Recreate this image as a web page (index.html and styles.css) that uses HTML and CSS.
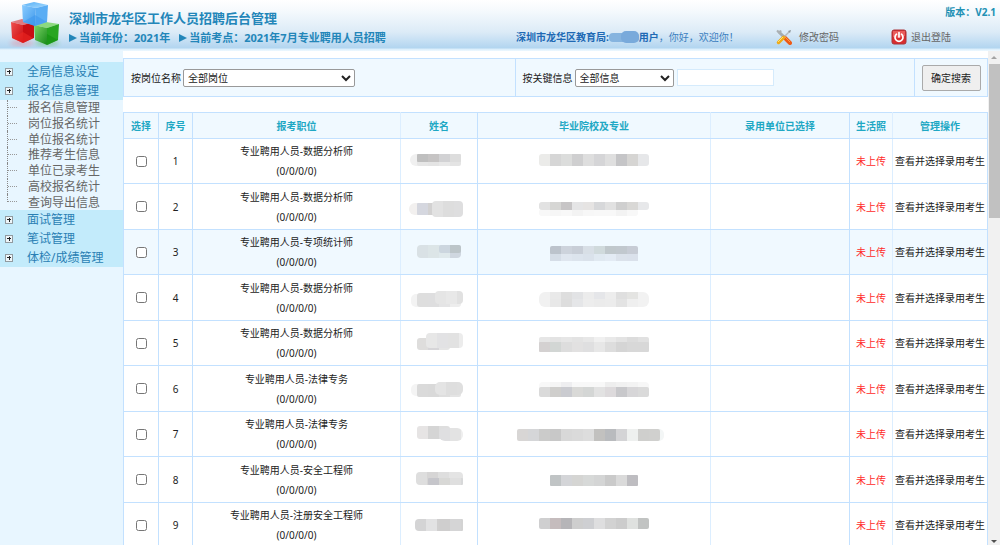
FILE: index.html
```html
<!DOCTYPE html>
<html lang="zh-CN">
<head>
<meta charset="utf-8">
<title>深圳市龙华区工作人员招聘后台管理</title>
<link rel="stylesheet" href="styles.css">
</head>
<body>
<header class="topbar">
  <svg class="logo" viewBox="0 0 69 50" aria-hidden="true">
    <defs>
      <linearGradient id="blueTop" x1="0" y1="0" x2="1" y2="1"><stop offset="0" stop-color="#56aef5"/><stop offset="1" stop-color="#a5dbff"/></linearGradient>
      <linearGradient id="blueL" x1="0" y1="0" x2="1" y2="1"><stop offset="0" stop-color="#8accff"/><stop offset="1" stop-color="#3d97ea"/></linearGradient>
      <linearGradient id="redL" x1="0" y1="0" x2="1" y2="1"><stop offset="0" stop-color="#f05050"/><stop offset="1" stop-color="#c80c10"/></linearGradient>
      <linearGradient id="greenL" x1="0" y1="0" x2="1" y2="1"><stop offset="0" stop-color="#7dd568"/><stop offset="1" stop-color="#168a18"/></linearGradient>
      <filter id="soft"><feGaussianBlur stdDeviation="2"/></filter>
    </defs>
    <ellipse cx="22" cy="43" rx="12" ry="3" fill="#e98b98" opacity=".5" filter="url(#soft)"/>
    <ellipse cx="47" cy="43" rx="12" ry="3" fill="#6fc27c" opacity=".6" filter="url(#soft)"/>
    <path d="M11 22L22 19L34 22L23 25Z" fill="#df7a80"/>
    <path d="M11 22L23 25L23 43L12 38Z" fill="url(#redL)"/>
    <path d="M23 25L34 22L34 38L23 43Z" fill="#c80e13"/>
    <path d="M12 38L23 32L33 38L23 43Z" fill="#f12a25" opacity=".55"/>
    <path d="M34 25L46 22L59 24L47 28Z" fill="#8cd97f"/>
    <path d="M34 25L47 28L47 45L35 40Z" fill="url(#greenL)"/>
    <path d="M47 28L59 24L58 40L47 45Z" fill="#28a522"/>
    <path d="M47 34L58 40L47 45Z" fill="#159313" opacity=".7"/>
    <path d="M22 5L34 2L48 5L36 8Z" fill="url(#blueTop)"/>
    <path d="M22 5L36 8L35 26L23 22Z" fill="url(#blueL)"/>
    <path d="M36 8L48 5L47 22L35 26Z" fill="#5aadf4"/>
    <path d="M23 22L35 15L47 22L35 26Z" fill="#4099ef" opacity=".6"/>
  </svg>
  <div class="brand">
    <h1 class="brand-title">深圳市龙华区工作人员招聘后台管理</h1>
    <p class="brand-sub"><span class="current">当前年份：2021年</span><span class="current">当前考点：2021年7月专业聘用人员招聘</span></p>
  </div>
  <div class="account">
    <div class="version">版本：V2.1</div>
    <div class="account-row">
      <p class="greeting"><b>深圳市龙华区教育局:</b><svg class="masked-user" viewBox="0 0 30 14" aria-hidden="true"><rect x="0" y="3" width="30" height="9" rx="4" fill="#86b4df"/><rect x="12" y="1" width="18" height="12" rx="5" fill="#79aadb"/></svg><b>用户</b>，你好，欢迎你！</p>
      <a class="tool-link" href="#">
        <svg class="tool-icon" viewBox="0 0 16 16" aria-hidden="true">
          <path d="M3 3L10 10" stroke="#a5acb0" stroke-width="3" stroke-linecap="round"/>
          <path d="M1 1.500L3.500 4L5 1.500" fill="none" stroke="#aab0b3" stroke-width="2"/>
          <path d="M8.500 8.500L14 14" stroke="#ee5a16" stroke-width="4" stroke-linecap="round"/>
          <path d="M9 8L14 13" stroke="#ff9c42" stroke-width="1"/>
          <path d="M8 8L13.500 2.500" stroke="#b4b9bb" stroke-width="1.500"/>
          <path d="M12 2L15 1L14 4" fill="#8c9498"/>
          <path d="M2.500 13.500L7.500 8.500" stroke="#efaa16" stroke-width="3.500" stroke-linecap="round"/>
          <path d="M2 13L7 8" stroke="#ffe26c" stroke-width="1"/>
        </svg>修改密码</a>
      <a class="tool-link logout" href="#">
        <svg class="tool-icon" viewBox="0 0 16 16" aria-hidden="true">
          <rect x="1" y="1" width="14" height="14" rx="2" fill="#d92c2e" stroke="#a83338"/>
          <path d="M2 2H14V7Q8 10 2 8Z" fill="#f07070" opacity=".7"/>
          <path d="M5.500 5.200A4 4 0 1 0 10.500 5.200M8 3.500V8" fill="none" stroke="#fff" stroke-width="1.700" stroke-linecap="round"/>
        </svg>退出登陆</a>
    </div>
  </div>
</header>
<div class="workspace">
  <nav class="sidebar">
    <a class="group" href="#"><span class="expander"></span>全局信息设定</a>
    <a class="group" href="#"><span class="expander"></span>报名信息管理</a>
    <ul class="tree">
      <li><a href="#">报名信息管理</a></li>
      <li><a href="#">岗位报名统计</a></li>
      <li><a href="#">单位报名统计</a></li>
      <li><a href="#">推荐考生信息</a></li>
      <li><a href="#">单位已录考生</a></li>
      <li><a href="#">高校报名统计</a></li>
      <li><a href="#">查询导出信息</a></li>
    </ul>
    <a class="group" href="#"><span class="expander"></span>面试管理</a>
    <a class="group" href="#"><span class="expander"></span>笔试管理</a>
    <a class="group" href="#"><span class="expander"></span>体检/成绩管理</a>
  </nav>
  <main class="content">
    <form class="search">
      <div class="field">
        <label for="post">按岗位名称</label>
        <select id="post" class="post-select"><option>全部岗位</option></select>
      </div>
      <div class="field">
        <label for="info">按关键信息</label>
        <select id="info" class="info-select"><option>全部信息</option></select>
        <input class="keyword" type="text" aria-label="关键信息">
      </div>
      <div class="submit"><button class="search-button" type="button">确定搜索</button></div>
    </form>
    <table class="records">
      <colgroup><col class="c-pick"><col class="c-no"><col class="c-post"><col class="c-name"><col class="c-school"><col class="c-unit"><col class="c-photo"><col class="c-action"></colgroup>
      <thead>
        <tr><th>选择</th><th>序号</th><th>报考职位</th><th>姓名</th><th>毕业院校及专业</th><th>录用单位已选择</th><th>生活照</th><th>管理操作</th></tr>
      </thead>
      <tbody>
        <tr><td><input type="checkbox" aria-label="选择 1"></td><td>1</td><td>专业聘用人员-数据分析师<br>(0/0/0/0)</td><td><svg class="mask name-mask"></svg></td><td><svg class="mask school-mask"></svg></td><td></td><td class="missing">未上传</td><td><a href="#">查看并选择录用考生</a></td></tr>
        <tr><td><input type="checkbox" aria-label="选择 2"></td><td>2</td><td>专业聘用人员-数据分析师<br>(0/0/0/0)</td><td><svg class="mask name-mask"></svg></td><td><svg class="mask school-mask"></svg></td><td></td><td class="missing">未上传</td><td><a href="#">查看并选择录用考生</a></td></tr>
        <tr class="active"><td><input type="checkbox" aria-label="选择 3"></td><td>3</td><td>专业聘用人员-专项统计师<br>(0/0/0/0)</td><td><svg class="mask name-mask"></svg></td><td><svg class="mask school-mask"></svg></td><td></td><td class="missing">未上传</td><td><a href="#">查看并选择录用考生</a></td></tr>
        <tr><td><input type="checkbox" aria-label="选择 4"></td><td>4</td><td>专业聘用人员-数据分析师<br>(0/0/0/0)</td><td><svg class="mask name-mask"></svg></td><td><svg class="mask school-mask"></svg></td><td></td><td class="missing">未上传</td><td><a href="#">查看并选择录用考生</a></td></tr>
        <tr><td><input type="checkbox" aria-label="选择 5"></td><td>5</td><td>专业聘用人员-数据分析师<br>(0/0/0/0)</td><td><svg class="mask name-mask"></svg></td><td><svg class="mask school-mask"></svg></td><td></td><td class="missing">未上传</td><td><a href="#">查看并选择录用考生</a></td></tr>
        <tr><td><input type="checkbox" aria-label="选择 6"></td><td>6</td><td>专业聘用人员-法律专务<br>(0/0/0/0)</td><td><svg class="mask name-mask"></svg></td><td><svg class="mask school-mask"></svg></td><td></td><td class="missing">未上传</td><td><a href="#">查看并选择录用考生</a></td></tr>
        <tr><td><input type="checkbox" aria-label="选择 7"></td><td>7</td><td>专业聘用人员-法律专务<br>(0/0/0/0)</td><td><svg class="mask name-mask"></svg></td><td><svg class="mask school-mask"></svg></td><td></td><td class="missing">未上传</td><td><a href="#">查看并选择录用考生</a></td></tr>
        <tr><td><input type="checkbox" aria-label="选择 8"></td><td>8</td><td>专业聘用人员-安全工程师<br>(0/0/0/0)</td><td><svg class="mask name-mask"></svg></td><td><svg class="mask school-mask"></svg></td><td></td><td class="missing">未上传</td><td><a href="#">查看并选择录用考生</a></td></tr>
        <tr><td><input type="checkbox" aria-label="选择 9"></td><td>9</td><td>专业聘用人员-注册安全工程师<br>(0/0/0/0)</td><td><svg class="mask name-mask"></svg></td><td><svg class="mask school-mask"></svg></td><td></td><td class="missing">未上传</td><td><a href="#">查看并选择录用考生</a></td></tr>
      </tbody>
    </table>
  </main>
  <div class="scrollbar" aria-hidden="true">
    <span class="arrow arrow-up"></span>
    <span class="thumb"></span>
    <span class="arrow arrow-down"></span>
  </div>
</div>
<script src="masks.js"></script>
</body>
</html>
```
FILE: styles.css
```css
* { box-sizing: border-box; }

body {
  margin: 0;
  height: 100vh;
  overflow: hidden;
  display: flex;
  flex-direction: column;
  background: #fff;
  color: #222;
  font: 10px/20px "Noto Sans", "Noto Sans CJK SC", sans-serif;
}

a { color: inherit; text-decoration: none; }
h1, p, ul { margin: 0; padding: 0; }

.topbar {
  flex: none;
  display: flex;
  height: 51px;
  background: linear-gradient(#fff 0, #f6fafd 10px, #dcebf7 32px, #b2d5f0 48px, #d9edfb 49px, #eef8ff 51px);
}
.logo { width: 69px; height: 50px; flex: none; }
.brand { color: #2386b9; font-weight: bold; padding-top: 8px; white-space: nowrap; }
.brand-title { font-size: 13px; line-height: 20px; }
.brand-sub { display: flex; gap: 9px; font-size: 11px; line-height: 20px; }
.current { display: flex; align-items: center; gap: 2px; }
.current::before { content: ""; border: solid transparent; border-width: 4px 0 4px 8px; border-left-color: #2386b9; }

.account { margin-left: auto; display: flex; flex-direction: column; }
.version { padding: 2px 4px 0 0; text-align: right; color: #2290b4; font-weight: bold; }
.account-row { display: flex; align-items: center; padding: 5px 49px 0 0; white-space: nowrap; }
.greeting { display: flex; align-items: center; width: 260px; color: #3c7fc0; }
.greeting b { color: #2069b4; }
.masked-user { width: 30px; height: 14px; }
.tool-link { display: flex; align-items: center; gap: 7px; color: #666; }
.logout { margin-left: 52px; gap: 4px; }
.tool-icon { width: 16px; height: 16px; }

.workspace { flex: 1; min-height: 0; display: flex; }

.sidebar {
  flex: none;
  width: 123px;
  padding-top: 11px;
  background: #e8f6ff;
  font-size: 12px;
}
.group {
  display: flex;
  align-items: center;
  gap: 14px;
  height: 19px;
  padding-left: 5px;
  background: #c3ebfb;
  color: #2a7fb4;
}
.expander {
  width: 8px;
  height: 8px;
  border: 1px solid #929ba0;
  background:
    linear-gradient(#222, #222) center / 4px 1px no-repeat,
    linear-gradient(#222, #222) center / 1px 4px no-repeat,
    #eef6fa;
}
.tree {
  display: grid;
  grid-auto-rows: 1fr;
  height: 110px;
  list-style: none;
  color: #666;
}
.tree li { display: flex; align-items: center; gap: 11px; padding-left: 7px; line-height: 15px; }
.tree li::before {
  content: "";
  align-self: stretch;
  width: 9px;
  border-left: 1px dotted #888;
  background: repeating-linear-gradient(90deg, #999 0 1px, transparent 1px 2px) center / 100% 1px no-repeat;
}
.tree li:last-child::before { align-self: flex-start; height: 8px; background-position: bottom; }

.content { flex: 1; min-width: 0; padding-top: 7px; overflow: hidden; }

.search {
  display: grid;
  grid-template-columns: 392fr 400fr 72fr;
  height: 39px;
  margin-bottom: 15px;
  background: #f0f9ff;
  border: 1px solid #c3e1ff;
}
.field { display: flex; align-items: center; gap: 2px; padding-left: 7px; border-right: 1px solid #c3e1ff; }
.search select, .keyword, .search-button { font: inherit; color: #222; }
.search select { height: 18px; padding: 0; line-height: 16px; background: #fff; border: 1px solid #999; border-radius: 2px; }
.post-select { width: 172px; }
.info-select { width: 99px; }
.keyword { width: 97px; height: 17px; margin-left: 1px; padding: 0 3px; background: #fff; border: 1px solid #d5ebfc; }
.submit { display: grid; place-items: center; }
.search-button { width: 59px; height: 26px; padding: 0; background: #efefef; border: 1px solid #aaa; border-radius: 2px; }

.records { width: 100%; table-layout: fixed; border-collapse: collapse; text-align: center; }
.c-pick { width: 35px; }
.c-no { width: 34px; }
.c-post { width: 208px; }
.c-name { width: 77px; }
.c-school { width: 233px; }
.c-unit { width: 139px; }
.c-photo { width: 43px; }
.c-action { width: 95px; }
.records th, .records td { padding: 0; border: 1px solid #c3e1ff; white-space: nowrap; }
.records th:nth-child(3), .records td:nth-child(3),
.records th:nth-child(5), .records td:nth-child(5),
.records th:nth-child(7), .records td:nth-child(7) { border-right-color: #dceeff; }
.records th { height: 26px; background: #f0f9ff; color: #1fa8c4; }
.records tbody tr { height: 45px; }
.records tbody tr:nth-child(even) { height: 46px; }
.active { background: #f0f9ff; }
.records input { display: block; width: 11px; height: 11px; margin: 0 auto; }
.missing { color: #ff2a2a; }
.mask { display: block; height: 24px; margin: 0 auto; }
.name-mask { width: 66px; }
.school-mask { width: 154px; }

.scrollbar {
  flex: none;
  display: flex;
  flex-direction: column;
  align-items: center;
  width: 12px;
  padding: 5px 0 2px;
  background: #f1f1f1;
}
.arrow { border: 3px solid transparent; }
.arrow-up { border-top: 0; border-bottom-color: #a3a3a3; }
.arrow-down { margin-top: auto; border-bottom: 0; border-top-color: #505050; }
.thumb { width: 11px; height: 154px; margin-top: 5px; background: #c1c1c1; }
```
FILE: masks.js
```javascript
// Each strip: [x, y, height, corner radius, colours of consecutive 11px cells].
const schools = [
  [[22, 5, 12, 3, "ebebe9 d6d6d6 dcdddc cfcfd0 dedede d5d5d7 dfdfdf c5c5c7 d6d5d3 e6e7e9"]],
  [[22, 14, 7, 3, "f8f8f8 f6f6f6 f8f8f8 f3f3f3 f7f7f7 f8f8f8 f8f8f8 f3f3f3 f8f8f8"],
   [22, 7, 8, 3, "e2e2e2 d6d6d4 c7c5c6 e5e5e6 e6e4e3 d7d8da e1e1e1 cfcfcf d9d8d6 e7e8ea"]],
  [[33, 6, 9, 2, "bcc3cc cdd3dc c8ced7 d8dfe6 d0dadc c0c8cc c1c8ce c7ccd5"],
   [33, 14, 7, 0, "d5dde7 dfe6ef dce4ed dae2eb e0e9f1 e3ebf4 dbe2eb dae1eb"]],
  [[22, 6, 15, 6, "f1f1f1 e9e9e9 dedede e2e3e5 ececec e5e6e9 ededed dfdfdf e4e4e2 f2f2f2"],
   [33, 13, 8, 0, "e8e8e8 dddddd e5e6e8 ededed ebebeb ececec e3e3e3 efefef"]],
  [[22, 6, 8, 2, "e6e6e6 e3e3e3 e6e6e6 e3e3e3 e7e7e7 f0f0f0 e9e9e9 e3e3e3 dcdcdc e1e1e1"],
   [22, 11, 10, 1, "d4d1d1 d2d6d4 dddddd e2e1e1 dfdfe0 e7e7e7 dddddd d5d5d5 d8d8d8 d8d8d8"]],
  [[22, 5, 9, 4, "f8f8f8 f5f5f5 eeeef0 f8f8f8 f8f8f8 f8f8f8 eeeeee f1f1f1 f3f3f3 f7f7f7"],
   [22, 10, 10, 2, "dadada cfcecc cacbd0 d9d9d7 d4d6d5 e2e2e2 dddadc c8c8cb d7d6d8 dadada"]],
  [[125, 7, 12, 5, "f5f7f7 f3f6f6"],
   [0, 7, 12, 2, "d8d6d5 d5d6d8 cbcbca c8c8c8 d8d8d8 dadada dddddd c2c1bf b9bbbe d4d4d6 eef0ef cfcfcd d0d0ce"]],
  [[33, 7, 11, 1, "c0c4c5 d4d5d8 d5d5d3 d7d9d8 d4d5d5 cacaca dadada bebdc1"]],
  [[22, 5, 11, 2, "cfcfd0 c5bcbd b6b5b8 cecece cecfd2 dededf d2d2d2 cccccc dfe1df c1c3c2"]]
];

const names = [
  [[4, 5, 12, 6, "f0f0f0 eeeeee"], [11, 9, 8, 2, "e6e6e6 e4e4e4 e8e8e8 e4e4e4"], [11, 5, 8, 1, "bfbfbf c6c4c4 d2d2d4 dddddd"]],
  [[3, 8, 12, 6, "f2f0ef f1f1f1"], [11, 8, 12, 1, "d5d7df d2d1d1 dddddd d9dad9"], [26, 6, 16, 4, "e2e2e2 dddddd dededf"]],
  [[11, 5, 13, 4, "d9e1e5 dce5e7 dfe9ec cfd7e0"], [33, 5, 8, 2, "ccd6df bcc5c9"]],
  [[5, 8, 13, 5, "f3f3f3 eeeeee"], [11, 7, 14, 3, "dedede dededf e4e4e5 ededed"], [29, 5, 13, 4, "e5e5e5 e8e8e8 e1e1e1"]],
  [[11, 7, 12, 3, "dedddc d6d5d8 e5e5e5"], [20, 2, 15, 4, "e7e7e7 e2e2e4 e2e2e2 ececec"]],
  [[5, 7, 12, 5, "f4f4f4 ededed"], [11, 7, 13, 2, "dadada d9d9d9 dedede e4e4e4"], [29, 5, 13, 5, "e4e4e4 dedede dfdfdf"]],
  [[11, 4, 13, 3, "e6e4e4 d5d5d5 dedede"], [33, 6, 13, 6, "dfdfe1 e3e3e3 eeeeee"]],
  [[10, 4, 13, 4, "dedede d6d5d5 dedede e4e4e4 e4e4e4"], [22, 10, 7, 1, "c6c6cb d8d8d6 dfdfdf d7d8d9"]],
  [[9, 6, 12, 4, "d4d4d5 e2e2e3 d0cfcf d3d3d3"], [33, 6, 12, 1, "cfcece d5d5d6 d3d3d3"]]
];

function drawMasks(selector, rows, prefix, width, limit) {
  document.querySelectorAll(selector).forEach((svg, row) => {
    svg.setAttribute("viewBox", `0 0 ${width} 24`);
    svg.setAttribute("aria-hidden", "true");
    svg.innerHTML = rows[row].map(([x, y, height, radius, colours], i) => {
      const cells = colours.split(" ");
      const id = `${prefix}${row}-${i}`;
      const span = Math.min(cells.length * 11, limit - x);
      const rects = cells.map((colour, n) =>
        `<rect x="${x + n * 11}" y="${y}" width="11" height="${height}" fill="#${colour}"/>`).join("");
      return `<clipPath id="${id}"><rect x="${x}" y="${y}" width="${span}" height="${height}" rx="${radius}"/></clipPath>` +
        `<g clip-path="url(#${id})" shape-rendering="crispEdges">${rects}</g>`;
    }).join("");
  });
}

drawMasks(".name-mask", names, "name", 66, 57);
drawMasks(".school-mask", schools, "school", 154, 154);
```
